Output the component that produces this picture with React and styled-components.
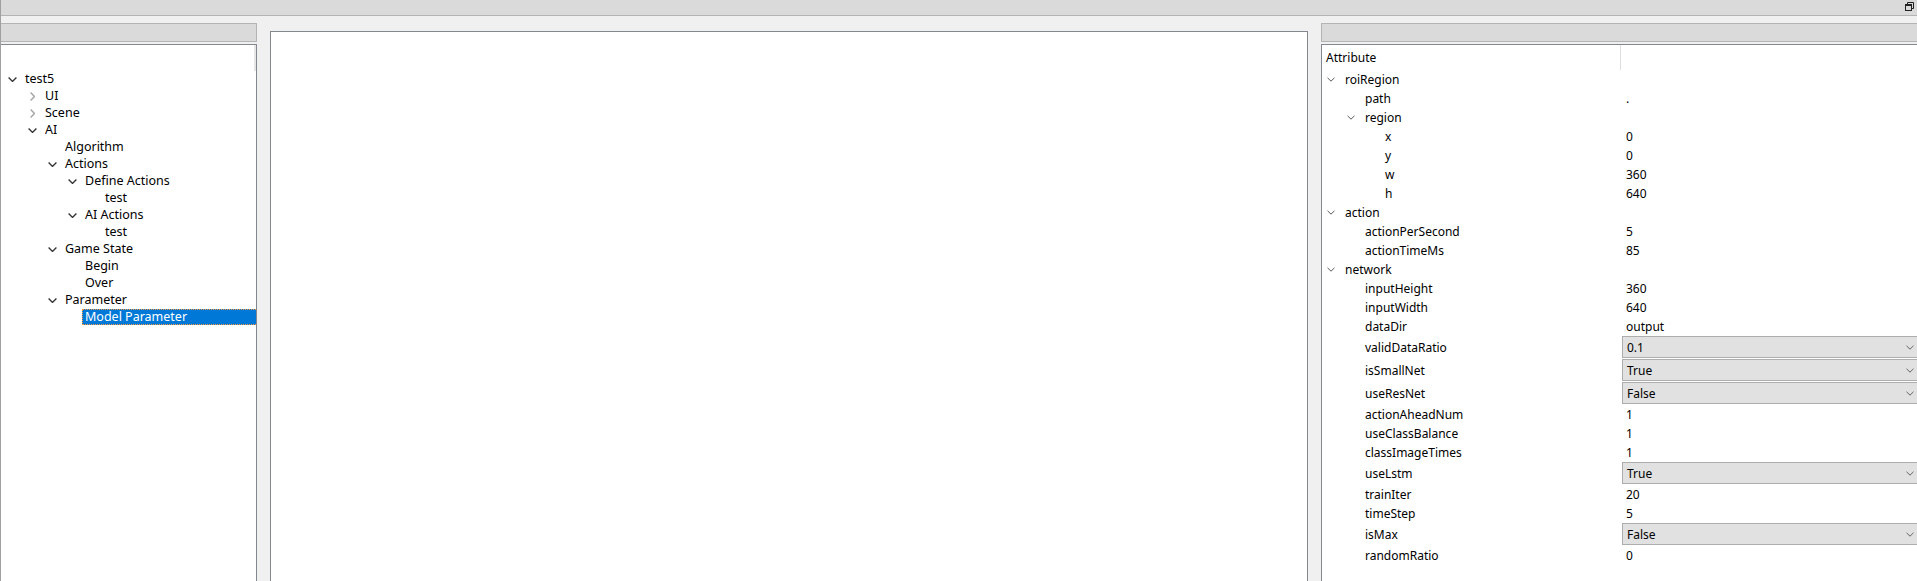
import React from "react";
import styled, { createGlobalStyle } from "styled-components";

const Global = createGlobalStyle`
  html, body { margin: 0; padding: 0; }
  body {
    background: #f0f0f0;
    font-family: "Noto Sans", "Microsoft YaHei", sans-serif;
    font-size: 12px;
    color: #000;
    overflow: hidden;
  }
`;

const Window = styled.div`
  width: 1917px;
  height: 581px;
  box-sizing: border-box;
  border-left: 1px solid #a0a0a0;
  display: flex;
  flex-direction: column;
  overflow: hidden;
`;

const TitleBar = styled.div`
  height: 15px;
  flex: none;
  background: #dadada;
  border-bottom: 1px solid #b4b4b4;
  display: flex;
  justify-content: flex-end;
  align-items: flex-start;
  padding-right: 3px;
`;

const RestoreBtn = styled.div`
  width: 9px;
  height: 9px;
  margin-top: 2px;
  display: flex;
`;

const Body = styled.div`
  flex: 1;
  display: grid;
  grid-template-columns: 256px 1038px 596px;
  column-gap: 13px;
  min-height: 0;
`;

const Dock = styled.div`
  display: flex;
  flex-direction: column;
  padding-top: 7px;
  min-height: 0;
`;

const DockHeader = styled.div`
  height: 17px;
  flex: none;
  background: #dadada;
  border: 1px solid #b4b4b4;
  border-left: ${(p) => (p.$noLeft ? "0" : "1px solid #b4b4b4")};
  border-right: ${(p) => (p.$noRight ? "0" : "1px solid #b4b4b4")};
  margin-bottom: 2px;
`;

const ListPanel = styled.div`
  flex: 1;
  background: #fff;
  border: 1px solid #828790;
  border-left: ${(p) => (p.$noLeft ? "0" : "1px solid #828790")};
  border-right: ${(p) => (p.$noRight ? "0" : "1px solid #828790")};
  border-bottom: 0;
  min-height: 0;
  overflow: hidden;
`;

const CenterView = styled.div`
  margin-top: 15px;
  background: #fff;
  border: 1px solid #828790;
  border-bottom: 0;
`;

/* ---------- scene tree ---------- */

const TreeHeader = styled.div`
  height: 26px;
  display: flex;
  justify-content: flex-end;
`;

const TreeHeaderEdge = styled.div`
  width: 2px;
  height: 26px;
  background: #e6e6e6;
`;

const TreeRow = styled.div`
  height: 17px;
  display: flex;
  align-items: flex-start;
  padding-left: ${(p) => 3 + p.$level * 20}px;
  font-size: 12.5px;
`;

const ArrowBox = styled.div`
  width: 16px;
  height: 17px;
  flex: none;
  display: flex;
  align-items: center;
  justify-content: center;
`;

const TreeLabel = styled.div`
  flex: 1;
  height: 16px;
  line-height: 16px;
  margin-left: 2px;
  white-space: nowrap;
  box-sizing: border-box;
  background: ${(p) => (p.$selected ? "#0078d7" : "transparent")};
  color: ${(p) => (p.$selected ? "#fff" : "#000")};
  border: 1px dotted ${(p) => (p.$selected ? "#ff9a3c" : "transparent")};
  border-right: 0;
  padding-left: 2px;
  display: flex;
  align-items: center;
`;

/* ---------- property grid ---------- */

const PropHeader = styled.div`
  height: 25px;
  display: grid;
  grid-template-columns: 299px 1fr;
`;

const PropHeaderCell = styled.div`
  display: flex;
  align-items: center;
  padding-left: 4px;
  border-right: ${(p) => (p.$divider ? "1px solid #dedede" : "0")};
`;

const PropRow = styled.div`
  height: ${(p) => (p.$combo ? 23 : 19)}px;
  display: grid;
  grid-template-columns: 300px 1fr;
`;

const NameCell = styled.div`
  display: flex;
  align-items: center;
  padding-left: ${(p) => 1 + p.$level * 20}px;
  white-space: nowrap;
`;

const PropArrow = styled.div`
  width: 16px;
  height: 100%;
  flex: none;
  display: flex;
  align-items: center;
  justify-content: center;
`;

const NameText = styled.span`
  margin-left: 6px;
`;

const ValueCell = styled.div`
  display: flex;
  align-items: center;
  padding-left: ${(p) => (p.$combo ? 0 : 4)}px;
  white-space: nowrap;
`;

const Combo = styled.div`
  flex: 1;
  align-self: flex-start;
  height: 22px;
  box-sizing: border-box;
  background: #e1e1e1;
  border: 1px solid #adadad;
  border-right: 0;
  display: flex;
  align-items: center;
  justify-content: space-between;
  padding-left: 4px;
  padding-right: 3px;
`;

/* ---------- icons ---------- */

const ChevronDown = ({ w = 9, h = 5, color = "#333", sw = 1.1 }) => (
  <svg width={w} height={h} viewBox="0 0 9 5" fill="none">
    <path d="M0.6 0.6 L4.5 4.4 L8.4 0.6" stroke={color} strokeWidth={sw} />
  </svg>
);

const ChevronRight = ({ color = "#a6a6a6" }) => (
  <svg width="5" height="9" viewBox="0 0 5 9" fill="none">
    <path d="M0.6 0.6 L4.4 4.5 L0.6 8.4" stroke={color} strokeWidth="1.4" />
  </svg>
);

const RestoreIcon = () => (
  <svg width="9" height="9" viewBox="0 0 9 9" fill="none">
    <path d="M2.5 2 V0.5 H8.5 V6.5 H7" stroke="#222" strokeWidth="1" />
    <rect x="0.5" y="2.5" width="6" height="6" stroke="#222" strokeWidth="1" />
    <path d="M0.5 3.5 H6.5" stroke="#222" strokeWidth="1" />
  </svg>
);

/* ---------- data ---------- */

const tree = [
  { label: "test5", level: 0, state: "open" },
  { label: "UI", level: 1, state: "closed" },
  { label: "Scene", level: 1, state: "closed" },
  { label: "AI", level: 1, state: "open" },
  { label: "Algorithm", level: 2 },
  { label: "Actions", level: 2, state: "open" },
  { label: "Define Actions", level: 3, state: "open" },
  { label: "test", level: 4 },
  { label: "AI Actions", level: 3, state: "open" },
  { label: "test", level: 4 },
  { label: "Game State", level: 2, state: "open" },
  { label: "Begin", level: 3 },
  { label: "Over", level: 3 },
  { label: "Parameter", level: 2, state: "open" },
  { label: "Model Parameter", level: 3, selected: true },
];

const props = [
  { name: "roiRegion", level: 0, group: true },
  { name: "path", level: 1, value: "." },
  { name: "region", level: 1, group: true },
  { name: "x", level: 2, value: "0" },
  { name: "y", level: 2, value: "0" },
  { name: "w", level: 2, value: "360" },
  { name: "h", level: 2, value: "640" },
  { name: "action", level: 0, group: true },
  { name: "actionPerSecond", level: 1, value: "5" },
  { name: "actionTimeMs", level: 1, value: "85" },
  { name: "network", level: 0, group: true },
  { name: "inputHeight", level: 1, value: "360" },
  { name: "inputWidth", level: 1, value: "640" },
  { name: "dataDir", level: 1, value: "output" },
  { name: "validDataRatio", level: 1, value: "0.1", combo: true },
  { name: "isSmallNet", level: 1, value: "True", combo: true },
  { name: "useResNet", level: 1, value: "False", combo: true },
  { name: "actionAheadNum", level: 1, value: "1" },
  { name: "useClassBalance", level: 1, value: "1" },
  { name: "classImageTimes", level: 1, value: "1" },
  { name: "useLstm", level: 1, value: "True", combo: true },
  { name: "trainIter", level: 1, value: "20" },
  { name: "timeStep", level: 1, value: "5" },
  { name: "isMax", level: 1, value: "False", combo: true },
  { name: "randomRatio", level: 1, value: "0" },
];

export default function App() {
  return (
    <>
      <Global />
      <Window>
        <TitleBar>
          <RestoreBtn>
            <RestoreIcon />
          </RestoreBtn>
        </TitleBar>
        <Body>
          <Dock>
            <DockHeader $noLeft />
            <ListPanel $noLeft>
              <TreeHeader>
                <TreeHeaderEdge />
              </TreeHeader>
              {tree.map((n, i) => (
                <TreeRow key={i} $level={n.level}>
                  <ArrowBox>
                    {n.state === "open" && <ChevronDown sw={1.4} />}
                    {n.state === "closed" && <ChevronRight />}
                  </ArrowBox>
                  <TreeLabel $selected={n.selected}>{n.label}</TreeLabel>
                </TreeRow>
              ))}
            </ListPanel>
          </Dock>
          <CenterView />
          <Dock>
            <DockHeader $noRight />
            <ListPanel $noRight>
              <PropHeader>
                <PropHeaderCell $divider>Attribute</PropHeaderCell>
                <PropHeaderCell />
              </PropHeader>
              {props.map((p, i) => (
                <PropRow key={i} $combo={p.combo}>
                  <NameCell $level={p.level}>
                    <PropArrow>
                      {p.group && <ChevronDown w={8} h={5} color="#555" />}
                    </PropArrow>
                    <NameText>{p.name}</NameText>
                  </NameCell>
                  <ValueCell $combo={p.combo}>
                    {p.combo ? (
                      <Combo>
                        <span>{p.value}</span>
                        <ChevronDown w={8} h={5} color="#606060" />
                      </Combo>
                    ) : (
                      p.value
                    )}
                  </ValueCell>
                </PropRow>
              ))}
            </ListPanel>
          </Dock>
        </Body>
      </Window>
    </>
  );
}
